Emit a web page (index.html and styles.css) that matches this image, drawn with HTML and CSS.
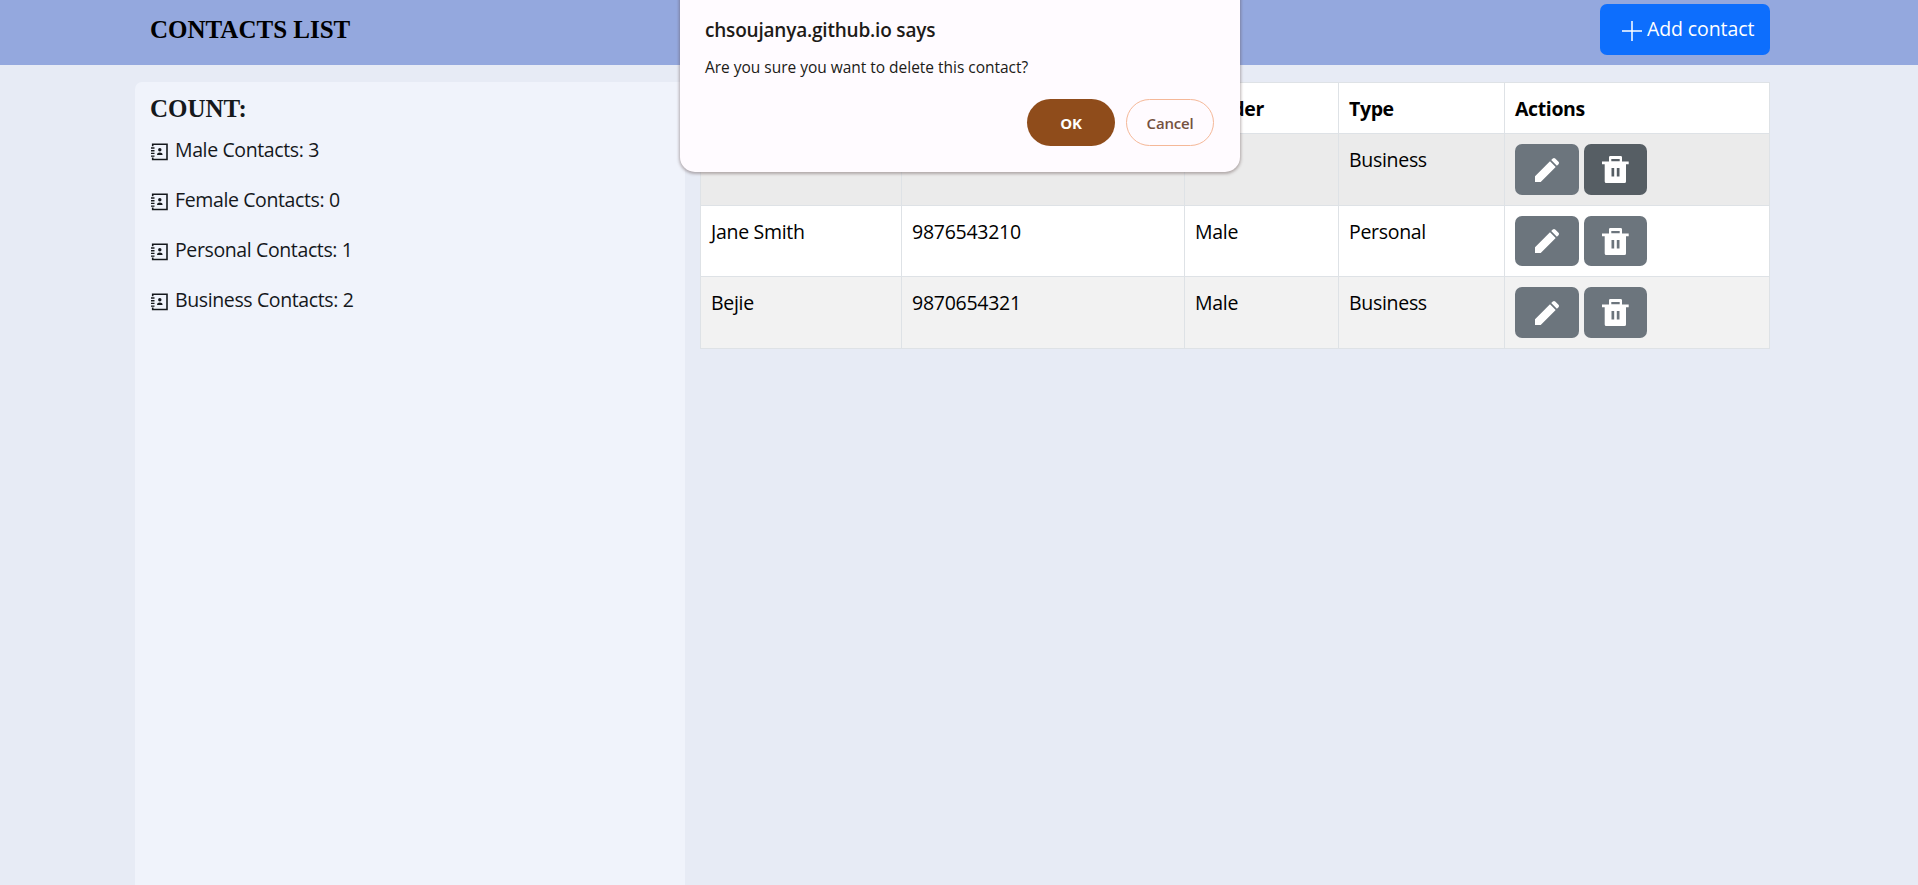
FILE: index.html
```html
<!DOCTYPE html>
<html lang="en">
<head>
<meta charset="utf-8">
<title>Contacts List</title>
<link rel="stylesheet" href="styles.css">
</head>
<body>
<svg class="sprite" aria-hidden="true">
  <symbol id="book" viewBox="0 0 17 18">
    <path d="M1.700 3.200V1.200h14.300v15.300H1.700V14.500" fill="none" stroke="#15181c" stroke-width="1.600"/>
    <path d="M0 5h3.500M0 7.700h3.500M0 10.400h3.500M0 13.100h3.500" stroke="#15181c" stroke-width="1.400"/>
    <circle cx="8.800" cy="6.800" r="1.700" fill="#15181c"/>
    <path d="M6 12c0-3.200 5.600-3.200 5.600 0z" fill="#15181c"/>
  </symbol>
  <symbol id="plus" viewBox="0 0 20 20">
    <path d="M10 0v20M0 10h20" stroke="#fff" stroke-width="1.500"/>
  </symbol>
  <symbol id="pencil" viewBox="0 0 24 24">
    <path d="M0 18.300 15 3.300 20.700 9 5.700 24H0zM16.200 2.100l1.600-1.600q1.200-1 2.400 0L23.500 3.800q1 1.200 0 2.400L21.900 7.800z" fill="#fff"/>
  </symbol>
  <symbol id="trash" viewBox="0 0 27 27">
    <path fill-rule="evenodd" d="M0 5.500h7V1.300Q7 0 8.300 0h10.400Q20 0 20 1.300v4.200h6.700v2.700H24v17.300Q24 27 22.500 27H4.200Q2.700 27 2.700 25.500V8.200H0zM9.300 3v2.300h8.400V3zM9.500 12v8.500h2.700V12zM14.800 12v8.500h2.700V12z" fill="#fff"/>
  </symbol>
</svg>

<header class="topbar">
  <div class="container topbar-inner">
    <h1 class="title">CONTACTS LIST</h1>
    <button class="btn btn-primary"><svg class="icon-plus"><use href="#plus"/></svg><span>Add contact</span></button>
  </div>
</header>

<main class="container content">
  <aside class="counts">
    <h2 class="title">COUNT:</h2>
    <p class="count"><svg class="icon-book"><use href="#book"/></svg>Male Contacts: 3</p>
    <p class="count"><svg class="icon-book"><use href="#book"/></svg>Female Contacts: 0</p>
    <p class="count"><svg class="icon-book"><use href="#book"/></svg>Personal Contacts: 1</p>
    <p class="count"><svg class="icon-book"><use href="#book"/></svg>Business Contacts: 2</p>
  </aside>

  <table class="contacts">
    <colgroup><col class="c-name"><col class="c-number"><col class="c-gender"><col class="c-type"><col></colgroup>
    <thead>
      <tr><th></th><th></th><th>Gender</th><th>Type</th><th>Actions</th></tr>
    </thead>
    <tbody>
      <tr class="hovered"><td></td><td></td><td></td><td>Business</td>
        <td class="action-cell"><div class="actions"><button class="btn btn-edit"><svg class="icon-pencil"><use href="#pencil"/></svg></button><button class="btn btn-delete active"><svg class="icon-trash"><use href="#trash"/></svg></button></div></td></tr>
      <tr><td>Jane Smith</td><td>9876543210</td><td>Male</td><td>Personal</td>
        <td class="action-cell"><div class="actions"><button class="btn btn-edit"><svg class="icon-pencil"><use href="#pencil"/></svg></button><button class="btn btn-delete"><svg class="icon-trash"><use href="#trash"/></svg></button></div></td></tr>
      <tr class="striped"><td>Bejie</td><td>9870654321</td><td>Male</td><td>Business</td>
        <td class="action-cell"><div class="actions"><button class="btn btn-edit"><svg class="icon-pencil"><use href="#pencil"/></svg></button><button class="btn btn-delete"><svg class="icon-trash"><use href="#trash"/></svg></button></div></td></tr>
    </tbody>
  </table>
</main>

<div class="dialog" role="dialog">
  <h3 class="dialog-title">chsoujanya.github.io says</h3>
  <p class="dialog-text">Are you sure you want to delete this contact?</p>
  <div class="dialog-buttons">
    <button class="pill pill-ok">OK</button>
    <button class="pill pill-cancel">Cancel</button>
  </div>
</div>
</body>
</html>
```

FILE: styles.css
```css
* { box-sizing: border-box; }
body {
  margin: 0;
  height: 885px;
  overflow: hidden;
  display: flex;
  flex-direction: column;
  background: #e7ebf5;
  color: #15181c;
  font: 19.5px/30px "Open Sans", "Noto Sans", sans-serif;
  letter-spacing: -0.38px;
}
h1, h2, h3, p { margin: 0; }
button { font: inherit; letter-spacing: inherit; border: 0; padding: 0; }
svg { display: block; flex: none; }
.sprite { position: absolute; width: 0; height: 0; }
.container { width: 1635px; margin: 0 148px 0 135px; }
.topbar { height: 65px; flex: none; background: #94a8de; }
.topbar-inner { display: flex; justify-content: space-between; padding: 4px 0 0 15px; }
.title {
  font: bold 25px/30px "Liberation Serif", "Times New Roman", serif;
  letter-spacing: 0;
  color: #000;
}
.topbar .title { padding-top: 11px; }
.btn { display: flex; align-items: center; border-radius: 7px; color: #fff; }
.btn-primary { width: 170px; height: 51px; padding-left: 22px; gap: 5px; background: #0d6efd; }
.btn-primary span { white-space: nowrap; margin-bottom: 2px; letter-spacing: -0.1px; }
.icon-plus { width: 20px; height: 20px; margin-top: 2px; }

.content { flex: 1; display: flex; gap: 15px; padding-top: 17px; align-items: flex-start; }
.counts {
  width: 550px;
  height: 803px;
  flex: none;
  padding: 12px 15px 12px 16px;
  background: #f0f3fb;
  border-radius: 7px 0 0 0;
}
.counts .title { height: 41px; margin-left: -1px; color: #15181c; }
.count { display: flex; align-items: center; height: 30px; margin-bottom: 20px; gap: 7px; }
.icon-book { width: 17px; height: 18px; margin-top: 4px; }

.contacts {
  width: 1070px;
  table-layout: fixed;
  border-collapse: collapse;
  background: #fff;
  color: #000;
}
.c-name { width: 201px; }
.c-number { width: 283px; }
.c-gender { width: 154px; }
.c-type { width: 166px; }
.contacts th, .contacts td {
  border: 1px solid #dee2e6;
  padding: 11px 10px 9px;
  text-align: left;
  vertical-align: top;
}
.contacts th { height: 51px; font-weight: 700; }
.contacts td { letter-spacing: -0.3px; }
.contacts td:nth-child(2) { letter-spacing: -0.27px; }
.contacts .action-cell { padding: 10px; }
.hovered { background: #ebebeb; }
.striped { background: #f2f2f2; }
.actions { display: flex; gap: 5px; }
.btn-edit, .btn-delete { height: 50.5px; justify-content: center; background: #6c757d; }
.btn-edit { width: 64px; }
.btn-delete { width: 63px; }
.btn-delete.active { background: #565e64; }
.icon-pencil { width: 24px; height: 24px; margin-top: 1px; }
.icon-trash { width: 27px; height: 27px; margin-top: 1px; }

.dialog {
  position: absolute;
  left: 680px;
  top: -10px;
  width: 560px;
  height: 182px;
  padding: 25px 26px 0 25px;
  background: #fffbff;
  border-radius: 0 0 15px 15px;
  box-shadow: 0 1px 3px 1px rgba(90, 70, 70, .4);
  color: #201a17;
}
.dialog-title { font-size: 19px; line-height: 30px; font-weight: 600; letter-spacing: -0.2px; }
.dialog-text { font-size: 15.5px; line-height: 24px; padding-top: 10px; letter-spacing: -0.02px; }
.dialog-buttons { display: flex; justify-content: flex-end; gap: 11px; padding-top: 20px; }
.pill { width: 88px; height: 47px; border-radius: 24px; font-size: 15px; font-weight: 600; letter-spacing: -0.2px; }
.pill-ok { background: #8f4c1b; color: #fff; font-weight: 700; }
.pill-cancel { background: transparent; border: 1.5px solid #f5b898; color: #75513f; }
```
